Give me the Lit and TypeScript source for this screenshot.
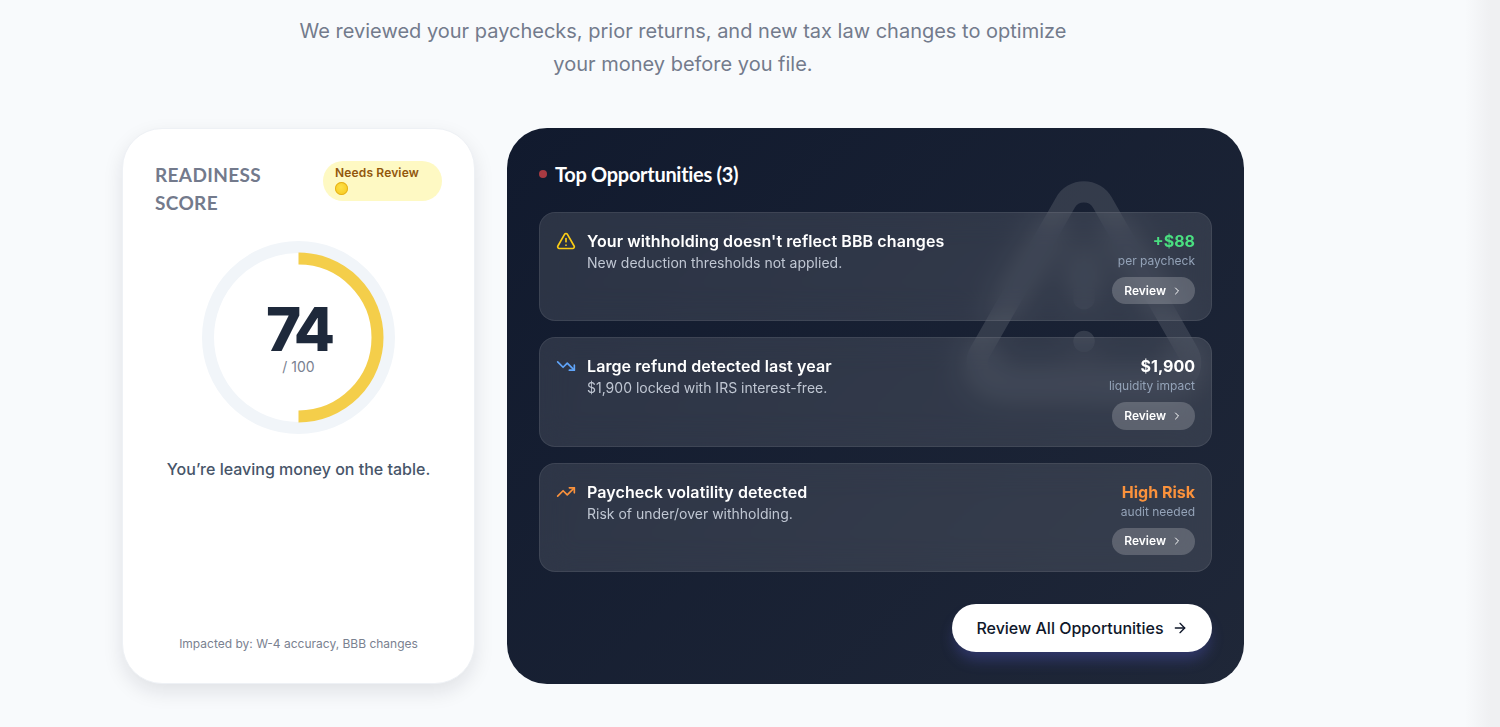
import { LitElement, html, css, svg } from 'lit'
import { customElement } from 'lit/decorators.js'

const ICONS = {
	warning: svg`<path d="m21.73 18-8-14a2 2 0 0 0-3.48 0l-8 14A2 2 0 0 0 4 21h16a2 2 0 0 0 1.73-3"/><path d="M12 9v4"/><path d="M12 17h.01"/>`,
	down: svg`<polyline points="22 17 13.5 8.5 8.5 13.5 2 7"/><polyline points="16 17 22 17 22 11"/>`,
	up: svg`<polyline points="22 7 13.5 15.5 8.5 10.5 2 17"/><polyline points="16 7 22 7 22 13"/>`,
	chevron: svg`<path d="m9 18 6-6-6-6"/>`,
	arrow: svg`<path d="M5 12h14"/><path d="m12 5 7 7-7 7"/>`,
}

const icon = (name: keyof typeof ICONS, cls: string) => html`
	<svg class=${cls} viewBox="0 0 24 24" fill="none" stroke="currentColor" stroke-width="2" stroke-linecap="round" stroke-linejoin="round">${ICONS[name]}</svg>
`

const OPPORTUNITIES = [
	{ icon: 'warning', tone: 'yellow', title: "Your withholding doesn't reflect BBB changes", text: 'New deduction thresholds not applied.', value: '+$88', valueTone: 'green', label: 'per paycheck' },
	{ icon: 'down', tone: 'blue', title: 'Large refund detected last year', text: '$1,900 locked with IRS interest-free.', value: '$1,900', valueTone: 'white', label: 'liquidity impact' },
	{ icon: 'up', tone: 'orange', title: 'Paycheck volatility detected', text: 'Risk of under/over withholding.', value: 'High Risk', valueTone: 'orange', label: 'audit needed' },
] as const

@customElement('app-root')
export class AppRoot extends LitElement {
	static styles = css`
		:host {
			display: block;
			min-height: 727px;
			font-family: Inter, 'Liberation Sans', sans-serif;
			background: linear-gradient(90deg, #f8fafc 0, #f8fafc 1465px, #eff0f2 1490px, #eff0f2 100%);
			overflow: hidden;
		}
		.page {
			width: 1122px;
			margin-left: 122px;
			padding-top: 15px;
		}
		.intro {
			width: 800px;
			margin: 0 auto 47px;
			font-size: 20px;
			line-height: 33px;
			color: #737b8c;
			text-align: center;
		}
		.columns {
			display: grid;
			grid-template-columns: 353px 737px;
			gap: 32px;
			height: 556px;
		}
		.score {
			display: flex;
			flex-direction: column;
			box-sizing: border-box;
			padding: 32px 32px 31px;
			background: #fff;
			border: 1px solid #eef1f5;
			border-radius: 40px;
			box-shadow: 0 8px 20px rgba(15, 23, 42, 0.1);
		}
		.score-head {
			display: flex;
			justify-content: space-between;
			align-items: flex-start;
		}
		.score-title {
			width: 130px;
			margin: 0;
			font-family: Lato, sans-serif;
			font-size: 19px;
			font-weight: 700;
			line-height: 28px;
			letter-spacing: 0.35px;
			color: #737a8c;
		}
		.badge {
			box-sizing: border-box;
			width: 119px;
			height: 40px;
			padding: 4px 12px;
			font-size: 12px;
			font-weight: 600;
			line-height: 15px;
			letter-spacing: 0.15px;
			color: #92570d;
			background: #fef9c3;
			border-radius: 20px;
		}
		.badge-dot {
			display: block;
			width: 13px;
			height: 13px;
			margin-top: 2px;
			border-radius: 50%;
			background: radial-gradient(circle at 45% 40%, #fde047, #f5c518);
			box-shadow: inset 0 0 0 1px #e5b01a;
		}
		.ring {
			position: relative;
			width: 193px;
			height: 193px;
			margin: 24px auto 0;
		}
		.ring svg {
			display: block;
			width: 193px;
			height: 193px;
		}
		.ring-label {
			position: absolute;
			inset: 0;
			display: flex;
			flex-direction: column;
			align-items: center;
			justify-content: center;
		}
		.ring-value {
			font-size: 60px;
			font-weight: 800;
			line-height: 58px;
			letter-spacing: -4px;
			color: #1e293b;
		}
		.ring-max {
			font-size: 14px;
			line-height: 18px;
			color: #7a8190;
		}
		.score-note {
			margin: 23px 0 0;
			font-size: 16px;
			font-weight: 500;
			line-height: 24px;
			text-align: center;
			color: #475569;
		}
		.score-foot {
			margin: auto 0 0;
			font-size: 12px;
			line-height: 16px;
			text-align: center;
			color: #7a8190;
		}
		.panel {
			position: relative;
			box-sizing: border-box;
			padding: 32px;
			overflow: hidden;
			color: #fff;
			background: linear-gradient(135deg, #111a2e, #1f2738);
			border-radius: 40px;
		}
		.watermark {
			position: absolute;
			top: 32px;
			right: 32px;
			width: 256px;
			height: 256px;
			color: rgba(255, 255, 255, 0.12);
		}
		.panel-head {
			position: relative;
			display: flex;
			align-items: center;
			gap: 8px;
			height: 28px;
			margin-bottom: 24px;
		}
		.panel-dot {
			width: 8px;
			height: 8px;
			border-radius: 50%;
			background: #a83a42;
		}
		.panel-title {
			margin: 0;
			font-family: Lato, sans-serif;
			font-size: 20px;
			font-weight: 700;
			letter-spacing: -0.3px;
		}
		.list {
			position: relative;
			display: flex;
			flex-direction: column;
			gap: 16px;
		}
		.item {
			display: flex;
			box-sizing: border-box;
			height: 109.4px;
			padding: 16px;
			background: rgba(255, 255, 255, 0.11);
			border: 1px solid rgba(255, 255, 255, 0.08);
			border-radius: 16px;
			backdrop-filter: blur(16px);
		}
		.item-icon {
			flex: none;
			width: 20px;
			height: 20px;
			margin: 2px 11px 0 0;
		}
		.yellow { color: #facc15; }
		.blue { color: #60a5fa; }
		.orange { color: #fb923c; }
		.green { color: #4ade80; }
		.white { color: #fff; }
		.item-main {
			flex: 1;
		}
		.item-title {
			margin: 0;
			font-size: 16px;
			font-weight: 600;
			line-height: 24px;
			letter-spacing: 0.09px;
		}
		.item-text {
			margin: 0;
			font-size: 14px;
			line-height: 20px;
			color: #c0c7d3;
		}
		.item-side {
			display: flex;
			flex-direction: column;
			align-items: flex-end;
		}
		.item-value {
			font-size: 16px;
			font-weight: 700;
			line-height: 24px;
		}
		.item-label {
			font-size: 12px;
			line-height: 16px;
			color: #94a3b8;
		}
		.review {
			display: flex;
			align-items: center;
			gap: 5px;
			height: 28px;
			margin-top: 8px;
			padding: 0 12px;
			font: 600 12px/16px Inter, sans-serif;
			color: #fff;
			background: rgba(255, 255, 255, 0.2);
			border: none;
			border-radius: 14px;
		}
		.review svg {
			width: 12px;
			height: 12px;
		}
		.panel-foot {
			position: relative;
			display: flex;
			justify-content: flex-end;
			margin-top: 32px;
		}
		.review-all {
			display: flex;
			align-items: center;
			justify-content: center;
			gap: 8px;
			width: 260px;
			height: 48px;
			font: 500 16px/24px Inter, sans-serif;
			color: #0f172a;
			background: #fff;
			border: none;
			border-radius: 24px;
			box-shadow: 0 10px 15px -3px rgba(99, 102, 241, 0.3);
		}
		.review-all svg {
			width: 16px;
			height: 16px;
		}
	`

	render() {
		return html`
			<div class="page">
				<p class="intro">We reviewed your paychecks, prior returns, and new tax law changes to optimize your money before you file.</p>
				<div class="columns">
					<section class="score">
						<div class="score-head">
							<h2 class="score-title">READINESS SCORE</h2>
							<div class="badge">Needs Review<span class="badge-dot"></span></div>
						</div>
						<div class="ring">
							<svg viewBox="0 0 193 193" fill="none" stroke-width="12">
								<circle cx="96.5" cy="96.5" r="90.5" stroke="#f1f5f9"/>
								<path d="M96.5 17.5a79 79 0 0 1 0 158" stroke="#f4ce4a"/>
							</svg>
							<div class="ring-label">
								<span class="ring-value">74</span>
								<span class="ring-max">/ 100</span>
							</div>
						</div>
						<p class="score-note">You’re leaving money on the table.</p>
						<p class="score-foot">Impacted by: W-4 accuracy, BBB changes</p>
					</section>
					<section class="panel">
						${icon('warning', 'watermark')}
						<div class="panel-head">
							<span class="panel-dot"></span>
							<h2 class="panel-title">Top Opportunities (3)</h2>
						</div>
						<div class="list">
							${OPPORTUNITIES.map(
								(o) => html`
									<article class="item">
										${icon(o.icon, `item-icon ${o.tone}`)}
										<div class="item-main">
											<h3 class="item-title">${o.title}</h3>
											<p class="item-text">${o.text}</p>
										</div>
										<div class="item-side">
											<span class="item-value ${o.valueTone}">${o.value}</span>
											<span class="item-label">${o.label}</span>
											<button class="review">Review ${icon('chevron', '')}</button>
										</div>
									</article>
								`,
							)}
						</div>
						<div class="panel-foot">
							<button class="review-all">Review All Opportunities ${icon('arrow', '')}</button>
						</div>
					</section>
				</div>
			</div>
		`
	}
}
